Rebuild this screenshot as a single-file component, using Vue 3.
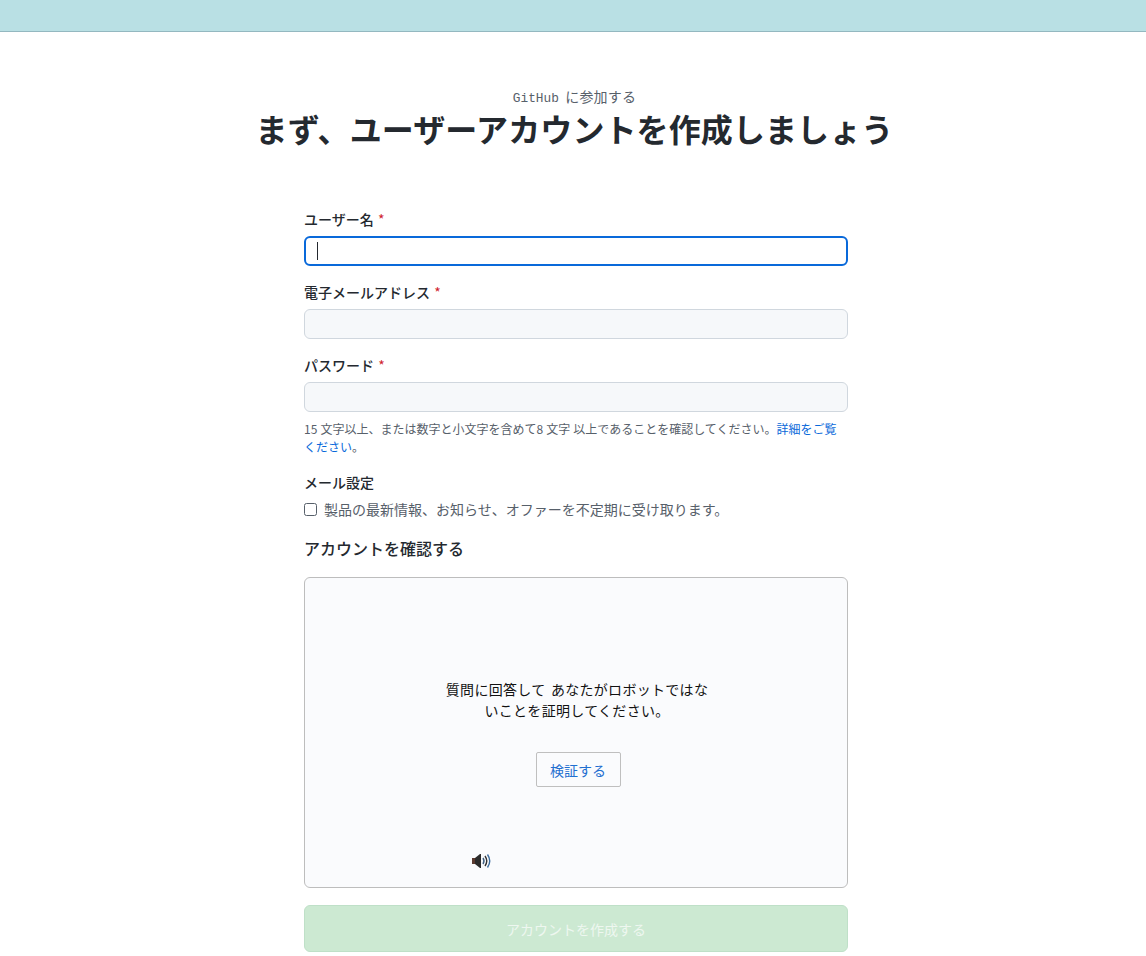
<script setup>
const fields = [
  { id: 'username', label: 'ユーザー名', focused: true },
  { id: 'email', label: '電子メールアドレス', focused: false },
  { id: 'password', label: 'パスワード', focused: false, hint: true },
]
</script>

<template>
  <div class="page">
    <div class="topbar"></div>
    <main class="main">
      <header class="head">
        <p class="eyebrow"><span class="mono">GitHub</span> に参加する</p>
        <h1 class="title">まず、ユーザーアカウントを作成しましょう</h1>
      </header>
      <form class="form" @submit.prevent>
        <div v-for="f in fields" :key="f.id" class="field">
          <label class="label" :for="f.id">{{ f.label }} <span class="req">*</span></label>
          <div class="input-wrap">
            <input :id="f.id" class="input" :class="{ focused: f.focused }" type="text" autocomplete="off" />
            <span v-if="f.focused" class="caret"></span>
          </div>
          <p v-if="f.hint" class="hint">15 文字以上、または数字と小文字を含めて8 文字 以上であることを確認してください。<a class="link" href="#">詳細をご覧ください</a>。</p>
        </div>
        <div class="prefs">
          <div class="label">メール設定</div>
          <label class="check-row">
            <input class="check" type="checkbox" />
            <span>製品の最新情報、お知らせ、オファーを不定期に受け取ります。</span>
          </label>
        </div>
        <h2 class="verify-title">アカウントを確認する</h2>
        <section class="captcha">
          <p class="captcha-text">質問に回答して あなたがロボットではないことを証明してください。</p>
          <button class="verify-btn" type="button">検証する</button>
          <svg class="audio" width="20" height="16" viewBox="0 0 20 16" aria-hidden="true">
            <rect x="0" y="5" width="3" height="6" fill="#5a3a30" />
            <path d="M3 5 L8 1 H9 V15 H8 L3 11 Z" fill="#2b2b2b" />
            <path d="M11 5 Q13 8 11 11" fill="none" stroke="#3f5f80" stroke-width="1.4" />
            <path d="M13 3 Q16.5 8 13 13" fill="none" stroke="#333" stroke-width="1.4" />
            <path d="M15.5 1.5 Q20 8 15.5 14.5" fill="none" stroke="#3f6f9f" stroke-width="1.4" />
          </svg>
        </section>
        <button class="submit" type="button" disabled>アカウントを作成する</button>
      </form>
    </main>
  </div>
</template>

<style>
html, body { margin: 0; background: #fff; }
</style>

<style scoped>
.page {
  height: 956px;
  overflow: hidden;
  font-family: "Noto Sans CJK JP", "Noto Sans", sans-serif;
  color: #24292f;
}
.topbar {
  height: 31px;
  background: #b9e0e4;
  border-bottom: 1px solid #94b8c0;
}
.main {
  display: flex;
  flex-direction: column;
  align-items: center;
  padding-left: 6px;
}
.head {
  margin-top: 55px;
  margin-left: -3px;
  text-align: center;
}
.eyebrow {
  margin: 0;
  height: 18px;
  font-size: 14px;
  line-height: 18px;
  word-spacing: 3px;
  letter-spacing: 0.2px;
  color: #57606a;
}
.mono { font-family: "Liberation Mono", monospace; font-size: 12.8px; letter-spacing: 0; }
.title {
  margin: 0;
  font-size: 32px;
  line-height: 46px;
  font-weight: 700;
  letter-spacing: 0.1px;
  color: #24292f;
}
.form {
  width: 544px;
  margin-top: 58px;
  display: flex;
  flex-direction: column;
}
.field { margin-bottom: 16px; }
.label {
  display: block;
  font-size: 14px;
  line-height: 21px;
  font-weight: 500;
  color: #24292f;
  margin-bottom: 6px;
}
.req { color: #cf222e; font-weight: 400; margin-left: 1px; }
.input-wrap { position: relative; }
.input {
  display: block;
  box-sizing: border-box;
  width: 100%;
  height: 30px;
  margin: 0;
  padding: 0 12px;
  border: 1px solid #d0d7de;
  border-radius: 6px;
  background: #f6f8fa;
  outline: none;
}
.input.focused {
  background: #fff;
  border: 2px solid #0969da;
}
.caret {
  position: absolute;
  left: 13px;
  top: 6px;
  width: 1px;
  height: 18px;
  background: #24292f;
}
.hint {
  margin: 8px 0 0;
  padding-right: 8px;
  font-size: 12px;
  line-height: 18px;
  word-spacing: 0.4px;
  color: #57606a;
}
.link { color: #0969da; text-decoration: none; }
.prefs { margin-bottom: 16px; }
.prefs .label { margin-bottom: 6px; }
.check-row {
  display: flex;
  align-items: center;
  gap: 7px;
  font-size: 14px;
  line-height: 21px;
  color: #57606a;
}
.check {
  appearance: none;
  box-sizing: border-box;
  width: 13px;
  height: 13px;
  margin: 0;
  border: 1px solid #57606a;
  border-radius: 2.5px;
  background: #fff;
}
.verify-title {
  margin: 0 0 17px;
  font-size: 16px;
  line-height: 24px;
  font-weight: 500;
  color: #24292f;
}
.captcha {
  position: relative;
  box-sizing: border-box;
  height: 311px;
  border: 1px solid #bdbdbd;
  border-radius: 6px;
  background: #fafbfd;
  display: flex;
  flex-direction: column;
  align-items: center;
  margin-bottom: 17px;
}
.captcha-text {
  width: 270px;
  margin: 101px 0 0 2px;
  font-size: 14px;
  line-height: 21px;
  word-spacing: 2px;
  letter-spacing: 0.3px;
  text-align: center;
  color: #111;
}
.verify-btn {
  box-sizing: border-box;
  width: 85px;
  height: 35px;
  margin: 31px 0 0 4px;
  padding: 0;
  border: 1px solid #bfbfbf;
  border-radius: 2px;
  background: #fafbfd;
  color: #1f6fd0;
  font: inherit;
  font-size: 14px;
  line-height: 35px;
}
.audio {
  position: absolute;
  left: 167px;
  top: 275px;
}
.submit {
  box-sizing: border-box;
  width: 100%;
  height: 47px;
  border: 1px solid #bfe0c8;
  border-radius: 6px;
  background: #cce9d2;
  color: #eef7f0;
  font: inherit;
  font-size: 14px;
  font-weight: 400;
  padding: 0;
}
</style>
